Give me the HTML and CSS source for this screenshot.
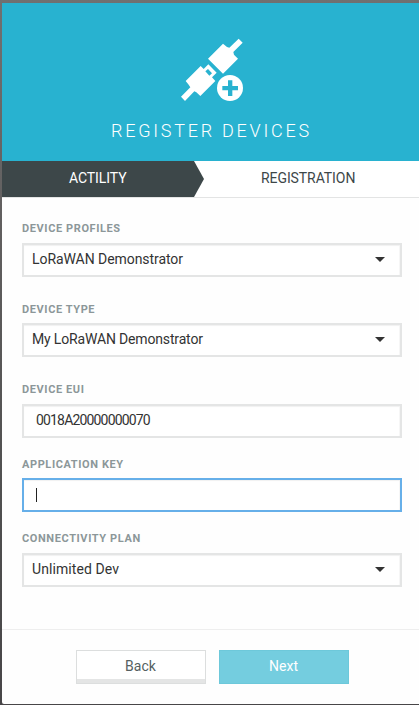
FILE: index.html
```html
<!DOCTYPE html>
<html lang="en">
<head>
<meta charset="utf-8">
<title>Register Devices</title>
<link rel="stylesheet" href="styles.css">
</head>
<body>
<main class="dialog">
  <header class="header">
    <svg class="icon" viewBox="0 0 300 270" aria-hidden="true">
      <g fill="#fff">
        <path d="M129 101 174 56 186 66 193 68 221 41 233 53 205 81 207 89 219 101 174 146Z"/>
        <path fill-rule="evenodd" d="M48 215 76 187 71 179 62 168 107 123 116 132 130 118 155 143 141 157 151 168 106 213 94 202 88 199 60 228ZM121 139 133 152 141 145 129 132Z"/>
        <circle cx="195" cy="189" r="39"/>
      </g>
      <path fill="#28b2d0" d="M189 166h13v17h17v13h-17v17h-13v-17h-17v-13h17z"/>
    </svg>
    <h1 class="title">REGISTER DEVICES</h1>
  </header>
  <nav class="steps">
    <div class="step active">ACTILITY</div>
    <div class="step">REGISTRATION</div>
  </nav>
  <form class="form">
    <div class="field f1"><label>DEVICE PROFILES</label>
      <div class="box"><span class="profile">LoRaWAN Demonstrator</span><i class="arrow"></i></div></div>
    <div class="field f2"><label>DEVICE TYPE</label>
      <div class="box"><span class="type">My LoRaWAN Demonstrator</span><i class="arrow"></i></div></div>
    <div class="field f3"><label>DEVICE EUI</label>
      <div class="box input"><span class="eui">0018A20000000070</span></div></div>
    <div class="field f4"><label>APPLICATION KEY</label>
      <div class="box input focus"><i class="caret"></i></div></div>
    <div class="field f5"><label>CONNECTIVITY PLAN</label>
      <div class="box"><span class="plan">Unlimited Dev</span><i class="arrow"></i></div></div>
  </form>
  <footer class="footer">
    <button class="btn back" type="button">Back</button>
    <button class="btn next" type="button">Next</button>
  </footer>
</main>
</body>
</html>
```
FILE: styles.css
```css
* { box-sizing: border-box; }
body {
  margin: 0;
  height: 705px;
  padding: 3px 0 1px 2px;
  overflow: hidden;
  background: linear-gradient(#707070, #626060 30%, #505050 70%, #484648);
  font-family: Roboto, "Liberation Sans", sans-serif;
  font-size: 14px;
  color: #333;
}
.dialog { height: 701px; background: #fefefe; display: flex; flex-direction: column; border-bottom-left-radius: 2px; }
.header { height: 158px; background: #28b2d0; padding-top: 22px; }
.icon { display: block; width: 100px; height: 90px; margin-left: 163px; }
.title {
  margin: 4px 0 0 109px;
  font-size: 18px;
  line-height: 24px;
  font-weight: 300;
  letter-spacing: 2.75px;
  color: #fff;
  white-space: nowrap;
}
.steps { display: flex; height: 37px; border-bottom: 1px solid #e3e4e4; background: #fff; }
.step { flex: 1; padding-left: 57px; line-height: 35px; letter-spacing: -.08px; color: #3d4749; white-space: nowrap; }
.step.active {
  flex: 0 0 202px;
  padding-left: 67px;
  background: #3d4749;
  color: #fff;
  clip-path: polygon(0 0, 192px 0, 100% 50%, 192px 100%, 0 100%);
}
.form { height: 431px; padding: 22px 17px 0 20px; }
.field { display: flex; flex-direction: column; justify-content: space-between; height: 57px; }
.f2 { margin-top: 24px; height: 56px; }
.f3 { margin-top: 24px; }
.f4 { margin-top: 18px; height: 56px; }
.f5 { margin-top: 18px; }
label { height: 16px; line-height: 17px; font-size: 11px; font-weight: 700; letter-spacing: .6px; color: #8c9799; white-space: nowrap; }
.box {
  height: 34px;
  border: 2px solid #e4e5e5;
  background: #fff;
  box-shadow: inset 0 1px 1px #f1f1f1, inset -1px 0 1px #f7f7f7;
  padding: 0 15px 0 8px;
  display: flex;
  align-items: center;
  line-height: 28px;
  white-space: nowrap;
}
.box span { padding-bottom: 2px; }
.profile { letter-spacing: -.06px; }
.type { letter-spacing: -.16px; }
.eui { letter-spacing: -.83px; }
.plan { letter-spacing: .08px; }
.input { padding-left: 12px; }
.focus { border-color: #66afe9; }
.arrow { width: 0; height: 0; margin: 0 0 1px auto; border: 5px solid transparent; border-top-color: #333; border-bottom: 0; }
.caret { width: 1px; height: 14px; background: #222; }
.footer { flex: 1; border-top: 1px solid #eee; padding: 20px 0 0 74px; display: flex; gap: 13px; }
.btn { width: 130px; height: 34px; padding: 0 1px 2px 0; border: 1px solid #dcdede; font: 14px/28px Roboto, sans-serif; }
.back { background: #fff; color: #555f61; box-shadow: inset 0 -4px #e4e5e5; }
.next { background: #74cddf; border-color: #6dc8da; color: #fff; }
```
